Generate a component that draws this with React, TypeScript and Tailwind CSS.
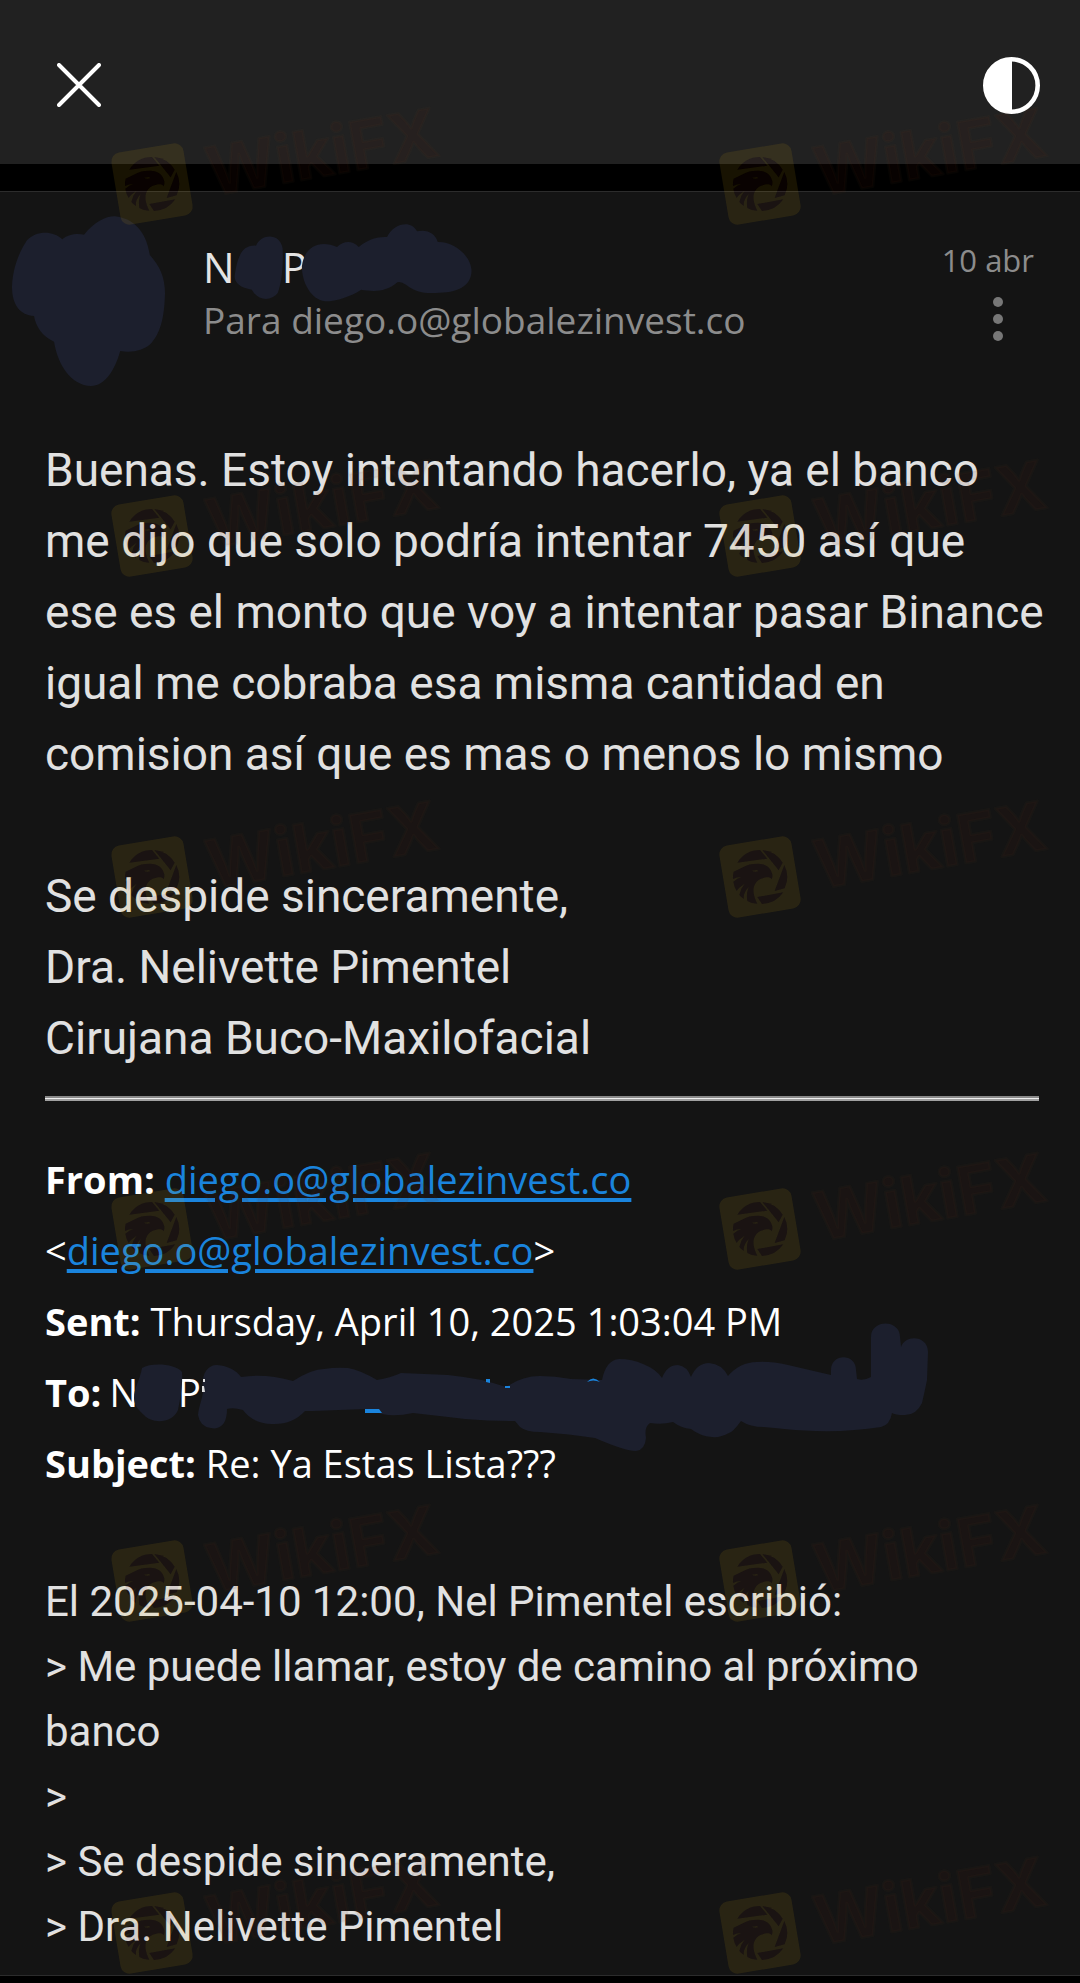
import React from 'react';

const bodyLines = [
  'Buenas. Estoy intentando hacerlo, ya el banco',
  'me dijo que solo podría intentar 7450 así que',
  'ese es el monto que voy a intentar pasar Binance',
  'igual me cobraba esa misma cantidad en',
  'comision así que es mas o menos lo mismo',
];

const signatureLines = [
  'Se despide sinceramente,',
  'Dra. Nelivette Pimentel',
  'Cirujana Buco-Maxilofacial',
];

const quotedLines = [
  'El 2025-04-10 12:00, Nel Pimentel escribió:',
  '> Me puede llamar, estoy de camino al próximo',
  'banco',
  '>',
  '> Se despide sinceramente,',
  '> Dra. Nelivette Pimentel',
];

const address = 'diego.o@globalezinvest.co';

const stampColumns = [152, 760];
const stampRows = [184, 536, 877, 1229, 1581, 1933];

const Lines: React.FC<{ lines: string[] }> = ({ lines }) => (
  <>
    {lines.map((line, index) => (
      <React.Fragment key={index}>
        {index > 0 && <br />}
        {line}
      </React.Fragment>
    ))}
  </>
);

const MailLink: React.FC = () => (
  <a
    href={`mailto:${address}`}
    className="text-[#1a84dd] underline decoration-4 underline-offset-4"
  >
    {address}
  </a>
);

const TopBar: React.FC = () => (
  <header className="flex h-[164px] items-center justify-between bg-[#212121] pt-1.5 pr-10 pl-[57px]">
    <button type="button" aria-label="Cerrar">
      <svg width="44" height="44" viewBox="0 0 44 44" fill="none" stroke="#fff" strokeWidth="4" strokeLinecap="round">
        <path d="M2 2 42 42M42 2 2 42" />
      </svg>
    </button>
    <button type="button" aria-label="Cambiar contraste">
      <svg width="57" height="57" viewBox="0 0 57 57">
        <circle cx="28.5" cy="28.5" r="26.2" fill="none" stroke="#fff" strokeWidth="4.6" />
        <path d="M29 1A27.5 27.5 0 0 0 29 56Z" fill="#fff" />
      </svg>
    </button>
  </header>
);

const AvatarBlob: React.FC = () => (
  <svg width="153" height="170" viewBox="36 648 444 510" preserveAspectRatio="none" className="shrink-0">
    <path
      fill="#1c1f2d"
      d="M36 860C38 800 60 750 80 720C105 692 155 690 182 718C200 702 225 700 245 704C275 665 310 648 335 649C385 655 425 690 436 765C465 800 480 830 480 880C478 960 465 1000 440 1030C415 1055 380 1058 350 1053C335 1110 305 1158 265 1158C210 1155 170 1100 158 1025C125 1010 105 980 100 948C60 945 36 915 36 860Z"
    />
  </svg>
);

const NameScribble: React.FC = () => (
  <svg
    width="269"
    height="80"
    viewBox="600 670 780 240"
    preserveAspectRatio="none"
    className="absolute -top-[18px] left-[3px]"
  >
    <path
      fill="#1c1f2d"
      d="M683 830C690 780 700 735 745 738C760 700 815 700 822 745C825 790 820 850 808 880C790 905 750 905 733 870C700 865 683 850 683 830ZM878 800C885 740 930 720 980 742C1000 722 1025 722 1043 742C1070 718 1100 710 1125 712C1145 670 1195 660 1212 695C1240 688 1265 700 1272 727C1320 725 1370 770 1370 815C1368 860 1330 880 1265 880C1235 880 1210 880 1180 855Q1165 845 1155 848C1120 880 1080 875 1050 870C1020 890 980 905 945 905C905 900 878 850 878 800Z"
    />
  </svg>
);

const RecipientScribble: React.FC = () => (
  <svg
    width="800"
    height="135"
    viewBox="130 1320 800 135"
    className="absolute -top-[37px] left-[85px]"
  >
    <g fill="#1c1f2d">
      <path d="M134 1398C134 1388 140 1380 142 1368C152 1362 176 1364 182 1372C183 1385 180 1400 178 1410C172 1424 152 1424 144 1415C138 1410 134 1404 134 1398Z" />
      <path d="M198 1415C199 1405 203 1398 203 1390C201 1376 206 1365 217 1365C228 1366 236 1370 241 1377Q265 1373 293 1381Q312 1369 324 1369Q336 1367 348 1368Q360 1370 377 1380Q390 1378 401 1373Q425 1374 448 1375Q480 1378 506 1387Q522 1376 540 1376Q555 1376 571 1379L602 1380Q606 1360 619 1359Q632 1359 643 1364Q656 1369 662 1378Q667 1365 678 1365Q687 1366 691 1377Q697 1363 709 1363Q722 1364 728 1376Q740 1362 757 1362Q770 1361 788 1365L831 1375L831 1370C831 1353 856 1353 856 1370L857 1379Q864 1381 871 1377L871 1337C871 1319 900 1319 900 1337L901 1347C905 1334 928 1335 928 1352L927 1380Q925 1390 922 1403Q916 1416 903 1415Q896 1415 892 1413Q890 1425 881 1427Q850 1432 815 1431Q790 1430 764 1427Q750 1427 741 1421Q733 1432 729 1433Q720 1438 712 1437Q700 1436 691 1429Q681 1428 673 1422Q662 1425 650 1423Q644 1427 646 1438Q645 1450 636 1451Q625 1451 595 1438Q570 1434 540 1432Q526 1432 520 1427L515 1421Q490 1421 465 1419Q440 1416 413 1413Q395 1417 382 1414L365 1409L313 1411L305 1411Q292 1425 272 1424Q252 1423 243 1410Q233 1407 227 1409Q227 1418 224 1423Q219 1430 211 1428Q200 1427 198 1415Z" />
    </g>
    <g fill="#1a84dd">
      <path d="M365 1409H379L382 1413H365Z" />
      <path d="M486 1379H490V1383L486 1382Z" />
      <path d="M505 1386H510V1388H505Z" />
      <path d="M587 1382Q593 1375 600 1382Q593 1379 587 1382Z" />
    </g>
    <path d="M203 1379H205V1382H203ZM202 1386H204L205 1392H202Z" fill="#ddd" />
  </svg>
);

const MessageHeader: React.FC = () => (
  <div className="flex pt-6 pr-[46px] pl-3">
    <AvatarBlob />
    <div className="ml-[38px] pt-[25px] font-['Open_Sans',sans-serif]">
      <div className="relative flex gap-[47px] text-[42px] leading-[52px] text-[#e4e4e4]">
        <span>N</span>
        <span>P</span>
        <NameScribble />
      </div>
      <p className="mt-px text-[37px] leading-[52px] text-[#8c8c8c]">Para {address}</p>
    </div>
    <div className="ml-auto flex flex-col items-end pt-6 font-['Open_Sans',sans-serif]">
      <time className="text-[31px] leading-10 text-[#8c8c8c]">10 abr</time>
      <button type="button" aria-label="Más opciones" className="mt-[17px] mr-[31px]">
        <svg width="10" height="44" viewBox="0 0 10 44" fill="#777">
          <circle cx="5" cy="5" r="5" />
          <circle cx="5" cy="22" r="5" />
          <circle cx="5" cy="39" r="5" />
        </svg>
      </button>
    </div>
  </div>
);

// Logo tile plus wordmark, repeated over the whole page
const Watermark: React.FC = () => (
  <svg
    aria-hidden="true"
    className="pointer-events-none absolute inset-0 h-full w-full overflow-hidden"
  >
    <defs>
      <g id="eagle" transform="scale(0.3333)">
        <path d="M-68-43A81 81 0 0 1 0-81L22-55Z" />
        <path d="M7-81A81 81 0 0 1 68-43L56-20Z" />
        <path d="M73-36A81 81 0 0 1 74 34L44 42Z" />
        <path d="M70 46A81 81 0 0 1 6 81L-8 60Z" />
        <path d="M-79-16L-50-30C-35-40-5-43 12-37C28-32 34-20 37-8Q38 0 35 7C31 0 24 0 18 1C8 4-4 6-10 14C-24 30-22 52-8 80Q-26 80-38 72Q-42 50-34 30Q-52 50-48 66Q-56 62-62 54Q-58 34-46 20Q-64 32-70 42Q-78 30-80 14Q-68 4-56 0Q-70 0-81 6Q-82-6-79-16ZM-24-19Q-16-14-6-17L-8-21Z" fillRule="evenodd" />
      </g>
      <mask id="cutout" maskUnits="userSpaceOnUse" x="-50" y="-50" width="100" height="100">
        <rect x="-50" y="-50" width="100" height="100" fill="#fff" />
        <use href="#eagle" fill="#000" />
      </mask>
      <g id="stamp">
        <g mask="url(#cutout)">
          <rect x="-36.5" y="-36.5" width="73" height="73" rx="9" transform="rotate(-9.5)" fill="rgb(240 190 20 / 0.1)" />
        </g>
        <use href="#eagle" fill="rgb(90 20 10 / 0.1)" />
        <text
          x="56"
          y="22"
          transform="rotate(-10)"
          fill="rgb(90 20 10 / 0.09)"
          stroke="rgb(110 70 35 / 0.05)"
          strokeWidth="3"
          strokeLinejoin="round"
          className="font-['Inter',sans-serif] text-[67px] font-bold"
        >
          WikiFX
        </text>
      </g>
    </defs>
    {stampRows.map(y => stampColumns.map(x => <use key={`${x}-${y}`} href="#stamp" x={x} y={y} />))}
  </svg>
);

export default function App() {
  return (
    <div className="relative min-h-screen bg-black pb-1.5">
      <TopBar />
      <main className="mt-[27px] border-y border-[#2c2c2c] bg-[#141414]">
        <MessageHeader />
        <div className="mt-[49px] pr-[41px] pb-4 pl-[45px]">
          <div className="-mr-4 font-['Roboto',sans-serif] text-[46px] leading-[71px] text-[#e1e1e1]">
            <p><Lines lines={bodyLines} /></p>
            <p className="mt-[71px]"><Lines lines={signatureLines} /></p>
          </div>
          <hr className="mt-[22px] h-[5px] border-t-2 border-b-2 border-t-[#8a8a8a] border-b-[#a0a0a0] bg-[#eee]" />
          <div className="mt-[43px] font-['Open_Sans',sans-serif] text-[38px] leading-[71px] text-white">
            <p><b>From:</b> <MailLink /></p>
            <p>&lt;<MailLink />&gt;</p>
            <p><b>Sent:</b> Thursday, April 10, 2025 1:03:04 PM</p>
            <div className="relative flex">
              <b>To:</b>
              <span className="ml-2">N</span>
              <span className="ml-10">P</span>
              <RecipientScribble />
            </div>
            <p><b>Subject:</b> Re: Ya Estas Lista???</p>
          </div>
          <p className="mt-[70px] font-['Roboto',sans-serif] text-[42px] leading-[65px] text-[#e1e1e1]">
            <Lines lines={quotedLines} />
          </p>
        </div>
      </main>
      <Watermark />
    </div>
  );
}
